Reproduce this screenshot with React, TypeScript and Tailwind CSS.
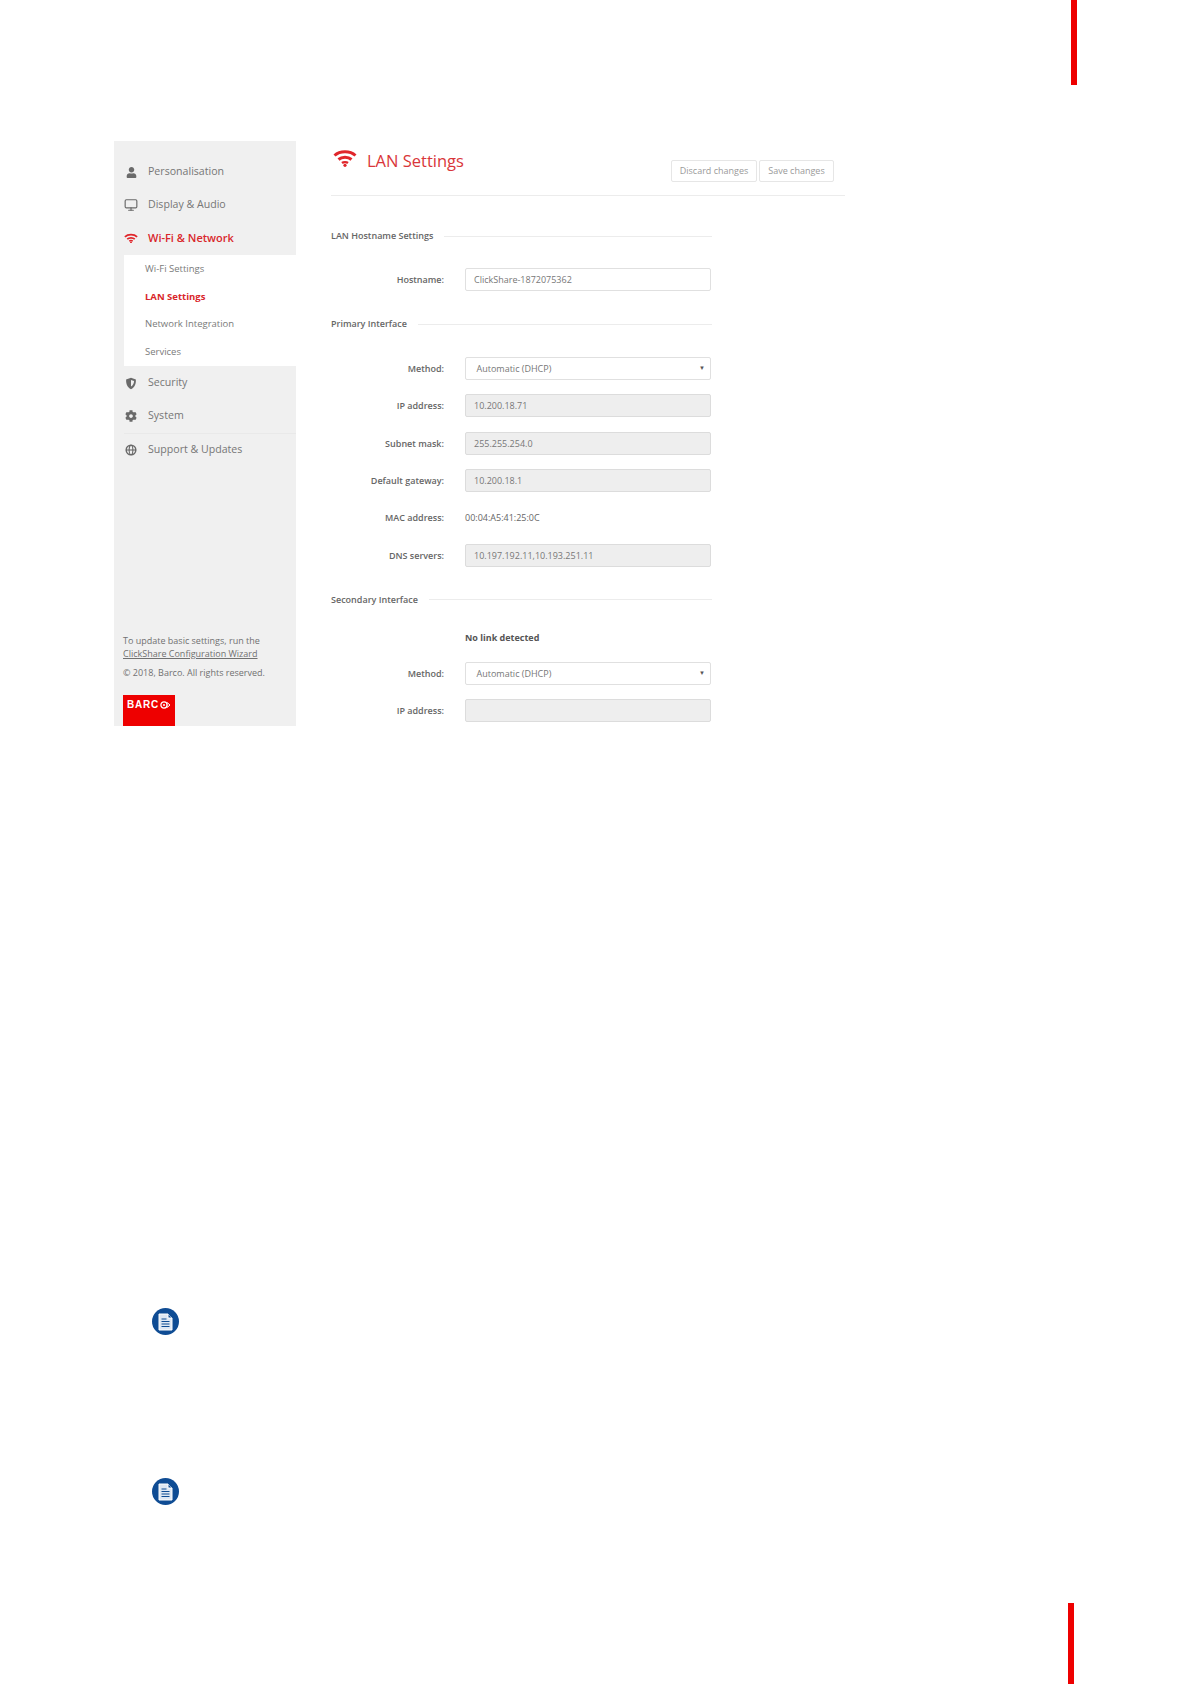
import React from 'react';
import { FaCog, FaUser } from 'react-icons/fa';
import { FiMonitor } from 'react-icons/fi';

const font = { fontFamily: '"Open Sans", "Noto Sans", sans-serif' };

const WifiIcon = ({ width, className }: any) => (
  <svg width={width} viewBox="0 0 24 18" fill="none" stroke="#e0262b" strokeWidth="3" className={className}>
    <path d="M1.500 6.500C7 1.500 17 1.500 22.500 6.500" />
    <path d="M5.500 10.500C9 7.500 15 7.500 18.500 10.500" />
    <path d="M9 14C10.500 12.800 13.500 12.800 15 14" strokeWidth="2.400" />
    <circle cx="12" cy="16.300" r="1.600" fill="#e0262b" stroke="none" />
  </svg>
);

const ShieldIcon = () => (
  <svg width="12" height="13" viewBox="0 0 13 14" className="text-[#6a6a6a]">
    <path d="M6.5 .8 11.8 2.6c.2 4.6-1.2 8.4-5.3 10.6C2.400 11 1 7.200 1.200 2.600Z" fill="currentColor" />
    <path d="M6.500 3.200 9.800 4.300c0 2.400-1 4.600-3.300 6Z" fill="#f0f0f0" />
  </svg>
);

const GlobeIcon = () => (
  <svg width="12" height="12" viewBox="0 0 13 13" fill="none" className="text-[#6a6a6a]">
    <circle cx="6.500" cy="6.500" r="5.200" stroke="currentColor" strokeWidth="1.600" />
    <ellipse cx="6.500" cy="6.500" rx="2" ry="5.200" stroke="currentColor" strokeWidth="1.200" />
    <path d="M1 6.500h11" stroke="currentColor" strokeWidth="1.200" />
  </svg>
);

const NoteIcon = () => (
  <div className="flex h-[27px] w-[27px] items-center justify-center rounded-full bg-[#0f4c94]">
    <svg width="15" height="18" viewBox="0 0 15 18" fill="none">
      <path d="M1 1h9l4 4v12H1Z" fill="#dfe8f3" stroke="#fff" strokeWidth="1" />
      <path d="M10 1v4h4" fill="#0f4c94" stroke="#fff" strokeWidth="1" />
      <path d="M3.500 6h5M3.500 8.500h8M3.500 11h8M3.500 13.500h8" stroke="#0f4c94" strokeWidth="1.200" />
    </svg>
  </div>
);

const BarcoMark = () => (
  <svg width="11" height="8" viewBox="0 0 11 8" fill="none">
    <circle cx="4" cy="4" r="3.100" stroke="#fff" strokeWidth="1.300" />
    <circle cx="4" cy="4" r="1" fill="#fff" />
    <path d="M7 1.500 10 4 7 6.500" stroke="#fff" strokeWidth="1" />
  </svg>
);

const MenuItem = ({ icon, label, active, className }: any) => (
  <div className={`flex items-center ${className || 'h-[33.2px]'}`}>
    <div className="flex w-[25px] justify-center pr-[9px]">{icon}</div>
    <span className={active ? 'text-[11px] font-semibold text-[#d9262b]' : 'text-[10.600px] text-[#767676]'}>{label}</span>
  </div>
);

const SubItem = ({ label, active }: any) => (
  <div className={active ? 'flex h-[27.6px] items-center pl-[21px] text-[9.500px] font-bold text-[#d9262b]' : 'flex h-[27.6px] items-center pl-[21px] text-[9.500px] text-[#7a7a7a]'}>
    {label}
  </div>
);

const Section = ({ title, className }: any) => (
  <div className={`flex w-[381px] items-center gap-[11px] ${className}`}>
    <span className="text-[9px] font-semibold whitespace-nowrap text-[#666]">{title}</span>
    <div className="h-px flex-1 bg-[#ececec]" />
  </div>
);

const Row = ({ label, children, tight }: any) => (
  <div className={`flex h-[23px] items-center ${tight ? 'mb-[12.500px]' : 'mb-[14.400px]'}`}>
    <div className="w-[113px] text-right text-[9px] font-semibold text-[#666]">{label}</div>
    <div className="ml-[21px] h-full w-[246px]">{children}</div>
  </div>
);

const TextBox = ({ value, disabled }: any) => (
  <div className={disabled
    ? 'flex h-full items-center rounded-[2px] border border-[#dcdcdc] bg-[#eeeeee] pl-[8px] text-[9px] text-[#777]'
    : 'flex h-full items-center rounded-[2px] border border-[#e0e0e0] bg-white pl-[8px] text-[9px] text-[#777]'}>
    {value}
  </div>
);

const SelectBox = () => (
  <div className="flex h-full items-center justify-between rounded-[2px] border border-[#e0e0e0] bg-white pr-[5px] pl-[10.500px] text-[9px] text-[#777]">
    <span>Automatic (DHCP)</span>
    <span className="text-[6px] text-[#555]">▼</span>
  </div>
);

const Sidebar = () => (
  <div className="flex h-[585px] w-[182px] flex-col bg-[#f0f0f0]">
    <div className="pt-[14.500px] pl-[9px]">
      <MenuItem icon={<FaUser size={11} className="text-[#6a6a6a]" />} label="Personalisation" />
      <MenuItem icon={<FiMonitor size={14} className="text-[#6a6a6a]" />} label="Display & Audio" />
      <MenuItem icon={<WifiIcon width={14} />} label="Wi-Fi & Network" active className="h-[32.700px]" />
    </div>
    <div className="ml-[10px] h-[111px] bg-white py-[1px]">
      <SubItem label="Wi-Fi Settings" />
      <SubItem label="LAN Settings" active />
      <SubItem label="Network Integration" />
      <SubItem label="Services" />
    </div>
    <div className="pt-[1px] pl-[9px]">
      <MenuItem icon={<ShieldIcon />} label="Security" />
      <MenuItem icon={<FaCog size={12} className="text-[#6a6a6a]" />} label="System" />
      <div className="ml-[1px] h-px bg-[#e9e9e9]" />
      <MenuItem icon={<GlobeIcon />} label="Support & Updates" className="h-[32.200px]" />
    </div>
    <div className="mt-auto pl-[9px] text-[9px] leading-[13px] text-[#707070]">
      <div>To update basic settings, run the</div>
      <div className="underline">ClickShare Configuration Wizard</div>
      <div className="mt-[6px]">© 2018, Barco. All rights reserved.</div>
      <div className="mt-[16px] flex h-[31px] w-[52px] items-start gap-[1px] bg-[#ee0000] pt-[3px] pl-[4px] text-white">
        <span className="text-[10px] leading-[14px] font-semibold tracking-[0.8px]" style={{ fontFamily: '"Liberation Sans", sans-serif' }}>BARC</span>
        <span className="mt-[3px]"><BarcoMark /></span>
      </div>
    </div>
  </div>
);

const MainForm = () => (
  <div className="ml-[35px] w-[514px]">
    <div className="flex h-[55px] items-start border-b border-[#ececec]">
      <WifiIcon width={24} className="mt-[8px] ml-[2px]" />
      <span className="mt-[8px] ml-[10px] text-[16.500px] leading-[24px] text-[#d9363a]">LAN Settings</span>
      <div className="mt-[19px] ml-auto mr-[11px] flex gap-[2px]">
        <div className="flex h-[22px] w-[86px] items-center justify-center rounded-[2px] border border-[#e6e6e6] text-[9px] text-[#9a9a9a]">Discard changes</div>
        <div className="flex h-[22px] w-[75px] items-center justify-center rounded-[2px] border border-[#e6e6e6] text-[9px] text-[#9a9a9a]">Save changes</div>
      </div>
    </div>
    <Section title="LAN Hostname Settings" className="mt-[33px] h-[14px]" />
    <div className="mt-[25px]">
      <Row label="Hostname:"><TextBox value="ClickShare-1872075362" /></Row>
    </div>
    <Section title="Primary Interface" className="mt-[26px] h-[14px]" />
    <div className="mt-[26px]">
      <Row label="Method:"><SelectBox /></Row>
      <Row label="IP address:"><TextBox value="10.200.18.71" disabled /></Row>
      <Row label="Subnet mask:"><TextBox value="255.255.254.0" disabled /></Row>
      <Row label="Default gateway:"><TextBox value="10.200.18.1" disabled /></Row>
      <Row label="MAC address:"><div className="flex h-full items-center text-[9px] text-[#666]">00:04:A5:41:25:0C</div></Row>
      <Row label="DNS servers:"><TextBox value="10.197.192.11,10.193.251.11" disabled /></Row>
    </div>
    <Section title="Secondary Interface" className="mt-[25.500px] h-[14px]" />
    <div className="mt-[20px]">
      <Row label="" tight><div className="flex h-full items-center text-[9px] font-bold text-[#555]">No link detected</div></Row>
      <Row label="Method:"><SelectBox /></Row>
      <Row label="IP address:"><TextBox value="" disabled /></Row>
    </div>
  </div>
);

export default function App() {
  return (
    <div className="h-[1684px] w-[1191px] overflow-hidden bg-white" style={font}>
      <div className="ml-[1071px] h-[85px] w-[6px] bg-[#ee0000]" />
      <div className="mt-[56px] ml-[114px] flex h-[586px] overflow-hidden">
        <Sidebar />
        <MainForm />
      </div>
      <div className="mt-[581px] ml-[152px]"><NoteIcon /></div>
      <div className="mt-[143px] ml-[152px]"><NoteIcon /></div>
      <div className="mt-[98px] ml-[1068px] h-[82px] w-[6px] bg-[#ee0000]" />
    </div>
  );
}
